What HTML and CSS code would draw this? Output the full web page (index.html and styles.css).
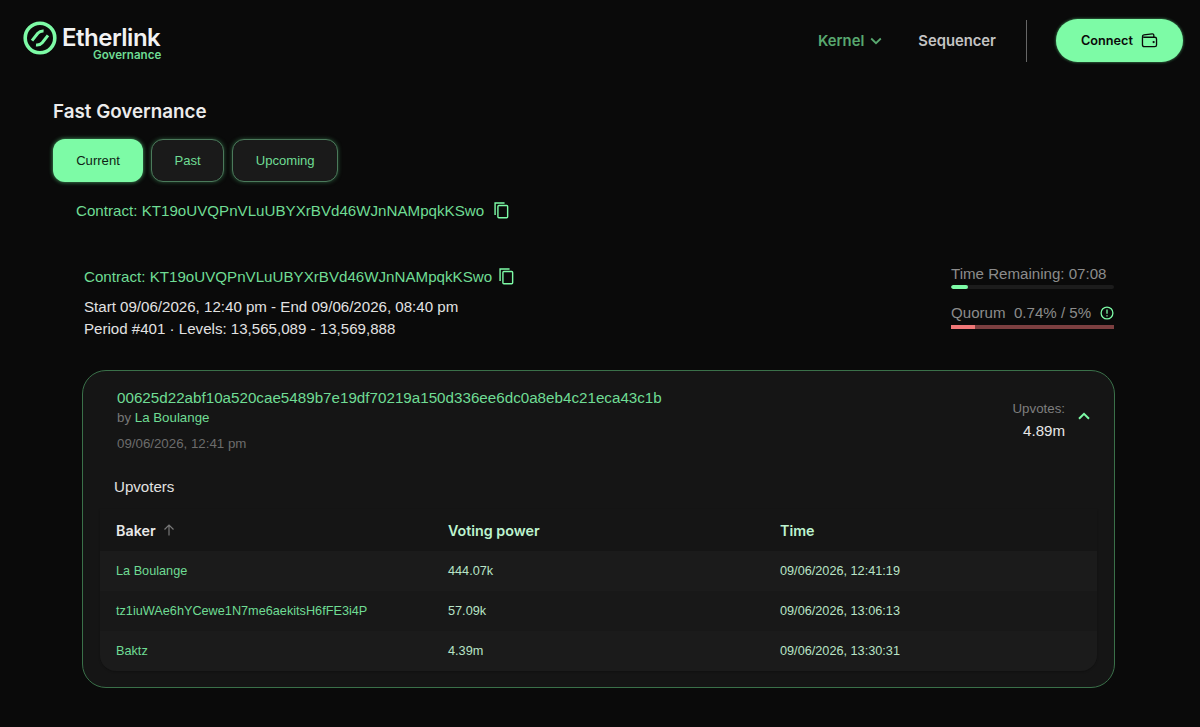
FILE: index.html
```html
<!DOCTYPE html>
<html lang="en">
<head>
  <meta charset="UTF-8">
  <meta name="viewport" content="width=device-width, initial-scale=1.0">
  <title>Etherlink Governance</title>
  <link rel="stylesheet" href="styles.css">
</head>
<body>
<header class="header">
  <div class="logo">
    <svg class="logo-mark" viewBox="0 0 34 34" fill="none" stroke="#7dfba6">
      <circle cx="17" cy="17" r="14.8" stroke-width="3.6"/>
      <path d="M9 19.6 L14.8 12.2 Q17 9.8 20.6 10 M13 24 Q17 24.4 19.2 21.8 L25 14.4" stroke-width="3"/>
    </svg>
    <div class="logo-text">
      <span class="logo-name">Etherlink</span>
      <span class="logo-sub">Governance</span>
    </div>
  </div>
  <nav class="nav">
    <a class="nav-link active">Kernel
      <svg class="nav-chevron" viewBox="0 0 12 8" fill="none" stroke="currentColor" stroke-width="1.8"><path d="M1.2 1.5 L6 6.2 L10.8 1.5"/></svg>
    </a>
    <a class="nav-link">Sequencer</a>
    <span class="nav-divider"></span>
    <button class="connect">Connect
      <svg class="wallet" viewBox="0 0 18 16" fill="none" stroke="#0a0a0a" stroke-width="1.4">
        <path d="M1.5 4.5 V12.5 Q1.5 14.6 3.6 14.6 H14.6 Q16.5 14.6 16.5 12.7 V6.4 Q16.5 4.5 14.6 4.5 H3.4 Q1.5 4.5 1.5 3.4 Q1.5 2.4 3 2.1 L12 1 Q13.6 0.9 13.6 2.4 V4.5"/>
        <circle cx="13.4" cy="9.6" r="0.5" fill="#0a0a0a"/>
      </svg>
    </button>
  </nav>
</header>

<main class="main">
  <h1 class="title">Fast Governance</h1>
  <div class="tabs">
    <button class="tab selected">Current</button>
    <button class="tab">Past</button>
    <button class="tab">Upcoming</button>
  </div>
  <div class="contract contract-top">
    <span>Contract: KT19oUVQPnVLuUBYXrBVd46WJnNAMpqkKSwo</span>
    <svg class="copy" viewBox="0 0 18 18" fill="none" stroke="#7dfba6" stroke-width="1.5"><path d="M3 13.5 H2.2 V1.5 H11.5 V2.5"/><rect x="5.2" y="4.2" width="10.3" height="13" rx="1"/></svg>
  </div>

  <section class="period">
    <div class="period-head">
      <div class="period-info">
        <div class="contract contract-inner">
          <span>Contract: KT19oUVQPnVLuUBYXrBVd46WJnNAMpqkKSwo</span>
          <svg class="copy" viewBox="0 0 18 18" fill="none" stroke="#7dfba6" stroke-width="1.5"><path d="M3 13.5 H2.2 V1.5 H11.5 V2.5"/><rect x="5.2" y="4.2" width="10.3" height="13" rx="1"/></svg>
        </div>
        <p class="period-line">Start 09/06/2026, 12:40 pm - End 09/06/2026, 08:40 pm</p>
        <p class="period-line">Period #401 · Levels: 13,565,089 - 13,569,888</p>
      </div>
      <div class="stats">
        <div class="stat-label">Time Remaining: 07:08</div>
        <div class="bar bar-time"><div class="bar-fill" style="width: 10.5%"></div></div>
        <div class="stat-label stat-quorum">
          <span>Quorum&nbsp; 0.74% / 5%</span>
          <svg class="info" viewBox="0 0 14 14" fill="none" stroke="#7dfba6" stroke-width="1.3"><circle cx="7" cy="7" r="5.9"/><path d="M7 3.6 V7.8 M7 9.3 V10.6"/></svg>
        </div>
        <div class="bar bar-quorum"><div class="bar-fill" style="width: 15%"></div></div>
      </div>
    </div>

    <div class="card">
      <div class="card-head">
        <div>
          <div class="hash">00625d22abf10a520cae5489b7e19df70219a150d336ee6dc0a8eb4c21eca43c1b</div>
          <div class="by">by <span class="green">La Boulange</span></div>
          <div class="date">09/06/2026, 12:41 pm</div>
        </div>
        <div class="upvotes">
          <div class="upvotes-text">
            <div class="upvotes-label">Upvotes:</div>
            <div class="upvotes-value">4.89m</div>
          </div>
          <svg class="caret" viewBox="0 0 12 8" fill="none" stroke="#7dfba6" stroke-width="2"><path d="M1 6.8 L6 1.8 L11 6.8"/></svg>
        </div>
      </div>
      <h2 class="upvoters">Upvoters</h2>
      <div class="table">
        <div class="row row-head">
          <div class="th th-baker">Baker
            <svg class="sort" viewBox="0 0 12 12" fill="none" stroke="#777" stroke-width="1.2"><path d="M6 11.5 V1 M1.5 5.5 L6 1 L10.5 5.5"/></svg>
          </div>
          <div class="th">Voting power</div>
          <div class="th">Time</div>
        </div>
        <div class="row">
          <div class="green">La Boulange</div>
          <div>444.07k</div>
          <div>09/06/2026, 12:41:19</div>
        </div>
        <div class="row">
          <div class="green">tz1iuWAe6hYCewe1N7me6aekitsH6fFE3i4P</div>
          <div>57.09k</div>
          <div>09/06/2026, 13:06:13</div>
        </div>
        <div class="row">
          <div class="green">Baktz</div>
          <div>4.39m</div>
          <div>09/06/2026, 13:30:31</div>
        </div>
      </div>
    </div>
  </section>
</main>
</body>
</html>
```

FILE: styles.css
```css
* {
    margin: 0;
    padding: 0;
    box-sizing: border-box;
}

body {
    height: 727px;
    overflow: hidden;
    font-family: "Liberation Sans", Arial, sans-serif;
    background-color: #0a0a0a;
    color: #e6e6e6;
}

.green {
    color: #6fdc94;
}

/* Header */
.header {
    display: flex;
    justify-content: space-between;
    align-items: flex-start;
    height: 101px;
    padding: 19px 17px 0 23px;
    font-family: Inter, sans-serif;
}

.logo {
    display: flex;
    gap: 5px;
    padding-top: 2px;
}

.logo-mark {
    width: 34px;
    height: 34px;
}

.logo-text {
    display: flex;
    flex-direction: column;
    align-items: flex-end;
}

.logo-name {
    font-size: 24px;
    font-weight: 600;
    line-height: 24px;
    letter-spacing: -0.5px;
    color: #f2f2f2;
    margin-top: 5px;
}

.logo-sub {
    font-size: 11.6px;
    font-weight: 600;
    line-height: 10px;
    color: #6fdc94;
    margin-right: -1px;
}

.nav {
    display: flex;
    align-items: center;
    height: 43px;
}

.nav-link {
    display: flex;
    align-items: center;
    gap: 6px;
    font-size: 14.8px;
    font-weight: 600;
    color: #c4c4c4;
    margin-right: 30px;
}

.nav-link.active {
    color: #58a86f;
    margin-right: 36px;
}

.nav-chevron {
    width: 12px;
    height: 8px;
}

.nav-divider {
    width: 1px;
    height: 42px;
    background-color: #666;
    margin-right: 29px;
}

.connect {
    display: flex;
    align-items: center;
    justify-content: center;
    gap: 8px;
    width: 127px;
    height: 43px;
    border: none;
    border-radius: 22px;
    font-family: inherit;
    font-size: 12.7px;
    font-weight: 600;
    color: #0a0a0a;
    background-color: #7dfba6;
    box-shadow: 0 0 3px #49a868;
}

.wallet {
    width: 17px;
    height: 15px;
}

/* Main */
.main {
    padding: 0 85px 0 53px;
}

.title {
    font-family: Inter, sans-serif;
    font-size: 18.8px;
    font-weight: 600;
    line-height: 22px;
    color: #ececec;
}

.tabs {
    display: flex;
    gap: 8px;
    margin-top: 16px;
}

.tab {
    height: 43px;
    border: 1px solid #4b7a5b;
    border-radius: 12px;
    font-family: inherit;
    font-size: 13.1px;
    color: #6fdc94;
    background-color: #1a1a1a;
    box-shadow: 0 0 4px #2c5c3c;
    padding: 0 22.5px;
}

.tab.selected {
    width: 90px;
    padding: 0;
    border: none;
    color: #0f1f15;
    background-color: #7dfba6;
    box-shadow: 0 0 4px #49a868;
}

.contract {
    display: flex;
    align-items: center;
    font-size: 15.15px;
    color: #6fdc94;
}

.contract-top {
    gap: 9px;
    height: 20px;
    margin: 18px 0 0 23px;
}

.contract-inner {
    gap: 6px;
    height: 20px;
}

.copy {
    width: 17px;
    height: 18px;
}

.period {
    margin-top: 46px;
}

.period-head {
    display: flex;
    justify-content: space-between;
    padding-left: 31px;
}

.period-line {
    font-size: 15.1px;
    line-height: 22px;
    color: #e2e2e2;
}

.contract-inner + .period-line {
    margin-top: 10px;
}

.stats {
    width: 163px;
    margin: -1px 1px 0 0;
}

.stat-label {
    font-size: 15.1px;
    line-height: 18px;
    color: #8c8c8c;
}

.stat-quorum {
    display: flex;
    justify-content: space-between;
    align-items: center;
    margin-top: 15px;
}

.info {
    width: 14px;
    height: 14px;
}

.bar {
    height: 4px;
    margin-top: 3px;
    background-color: #1c1c1c;
    border-radius: 2px;
    overflow: hidden;
}

.bar-time {
    margin-top: 2px;
}

.bar-fill {
    height: 100%;
    background-color: #7dfba6;
    border-radius: 2px;
}

.bar-quorum {
    background-color: #7c3f40;
    border-radius: 0;
}

.bar-quorum .bar-fill {
    background-color: #f07777;
    border-radius: 0;
}

/* Card */
.card {
    width: 1033px;
    height: 318px;
    margin: 30px 0 0 29px;
    padding: 18px 17px 0 17px;
    background-color: #151515;
    border: 1px solid #3a7049;
    border-radius: 24px;
}

.card-head {
    display: flex;
    justify-content: space-between;
    padding-left: 17px;
}

.hash {
    font-size: 15.2px;
    line-height: 18px;
    color: #6fdc94;
}

.by {
    font-size: 13.3px;
    line-height: 16px;
    margin-top: 3px;
    color: #777;
}

.date {
    font-size: 13.3px;
    line-height: 16px;
    margin-top: 10px;
    color: #6c6c6c;
}

.upvotes {
    display: flex;
    align-items: center;
    gap: 13px;
    height: 44px;
    margin: 9px 7px 0 0;
}

.upvotes-text {
    text-align: right;
}

.upvotes-label {
    font-size: 13.3px;
    line-height: 18px;
    color: #7e7e7e;
}

.upvotes-value {
    font-size: 15.1px;
    line-height: 20px;
    margin-top: 3px;
    color: #e6e6e6;
}

.caret {
    width: 12px;
    height: 8px;
    margin-top: -8px;
}

.upvoters {
    font-size: 15.1px;
    font-weight: 400;
    line-height: 18px;
    margin: 26px 0 0 14px;
    color: #e2e2e2;
}

.table {
    margin-top: 13px;
    border-radius: 0 0 16px 16px;
    overflow: hidden;
    box-shadow: 0 1px 2px rgba(0, 0, 0, 0.25);
}

.row {
    display: grid;
    grid-template-columns: 332px 332px 1fr;
    align-items: center;
    height: 40px;
    padding-left: 16px;
    font-size: 12.7px;
    color: #b9e4c7;
    background-color: #181818;
}

.row:nth-child(even) {
    background-color: #1b1b1b;
}

.row-head {
    height: 42px;
    background-color: #151515;
}

.th {
    display: flex;
    align-items: center;
    gap: 7px;
    font-family: Inter, sans-serif;
    font-size: 14.3px;
    font-weight: 600;
    color: #bdf3cf;
}

.th-baker {
    color: #e8e8e8;
}

.sort {
    width: 12px;
    height: 12px;
}
```
